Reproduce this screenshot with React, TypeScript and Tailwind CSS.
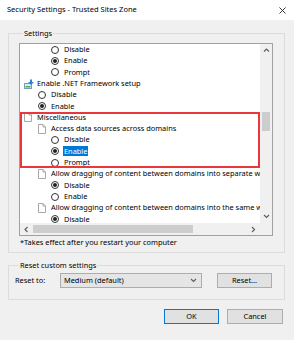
import type { ReactNode } from 'react';

type Row = {
  level: 0 | 1 | 2;
  kind: 'radio' | 'page' | 'net';
  text: string;
  checked?: boolean;
  selected?: boolean;
};

const top: Row[] = [
  { level: 2, kind: 'radio', text: 'Disable' },
  { level: 2, kind: 'radio', text: 'Enable', checked: true },
  { level: 2, kind: 'radio', text: 'Prompt' },
  { level: 0, kind: 'net', text: 'Enable .NET Framework setup' },
  { level: 1, kind: 'radio', text: 'Disable' },
  { level: 1, kind: 'radio', text: 'Enable', checked: true },
];

const marked: Row[] = [
  { level: 0, kind: 'page', text: 'Miscellaneous' },
  { level: 1, kind: 'page', text: 'Access data sources across domains' },
  { level: 2, kind: 'radio', text: 'Disable' },
  { level: 2, kind: 'radio', text: 'Enable', checked: true, selected: true },
  { level: 2, kind: 'radio', text: 'Prompt' },
];

const rest: Row[] = [
  { level: 1, kind: 'page', text: 'Allow dragging of content between domains into separate windows' },
  { level: 2, kind: 'radio', text: 'Disable', checked: true },
  { level: 2, kind: 'radio', text: 'Enable' },
  { level: 1, kind: 'page', text: 'Allow dragging of content between domains into the same window' },
  { level: 2, kind: 'radio', text: 'Disable', checked: true },
];

function Radio({ checked }: { checked?: boolean }) {
  return (
    <span className="w-[8px] h-[8px] rounded-full border border-[#333] bg-white flex items-center justify-center">
      {checked && <span className="w-[4px] h-[4px] rounded-full bg-[#222]" />}
    </span>
  );
}

function PageIcon() {
  return (
    <svg width="8" height="10" viewBox="0 0 8 10">
      <path d="M0.5 0.5h4.5l2.5 2.5v6.5h-7z" fill="#fff" stroke="#a8a8a8" />
      <path d="M5 0.5v2.5h2.5" fill="none" stroke="#a8a8a8" />
    </svg>
  );
}

function NetIcon() {
  return (
    <svg width="11" height="10" viewBox="0 0 11 10">
      <rect x="0.5" y="4.5" width="7" height="5" fill="#dfe9f3" stroke="#7a9cc0" />
      <rect x="1.5" y="7" width="5" height="1.5" fill="#4caf50" />
      <path d="M6 0.5h2v2.5h2l-3 3-3-3h2z" fill="#2f7fd8" />
    </svg>
  );
}

function Chevron({ dir }: { dir: 'up' | 'down' | 'left' | 'right' }) {
  const d = {
    up: 'M1 4.5l2.5-2.5 2.5 2.5',
    down: 'M1 2l2.5 2.5 2.5-2.5',
    left: 'M4.5 1l-2.5 2.5 2.5 2.5',
    right: 'M2 1l2.5 2.5-2.5 2.5',
  }[dir];
  return (
    <svg width="7" height="7" viewBox="0 0 7 7">
      <path d={d} fill="none" stroke="#606060" strokeWidth="1.2" />
    </svg>
  );
}

function Item({ row }: { row: Row }) {
  const pad = row.level === 0 ? 'pl-[4px]' : row.level === 1 ? 'pl-[18px]' : 'pl-[31px]';
  return (
    <div className={`flex items-center h-[11.3px] whitespace-nowrap ${pad}`}>
      <span className="w-[13px] shrink-0 flex items-center">
        {row.kind === 'radio' && <Radio checked={row.checked} />}
        {row.kind === 'page' && <PageIcon />}
        {row.kind === 'net' && <NetIcon />}
      </span>
      <span className={row.selected ? 'bg-[#0078d7] text-white px-[1px] -ml-[1px] leading-[10px]' : ''}>
        {row.text}
      </span>
    </div>
  );
}

function Button({ children, focused, w }: { children: ReactNode; focused?: boolean; w: string }) {
  return (
    <div
      className={`${w} h-[15px] flex items-center justify-center bg-[#e1e1e1] border ${
        focused ? 'border-[#0078d7]' : 'border-[#adadad]'
      }`}
    >
      {children}
    </div>
  );
}

export default function App() {
  return (
    <div className="w-[294px] h-[340px] bg-[#f0f0f0] flex flex-col text-[7.4px] text-black font-['Noto_Sans',sans-serif] overflow-hidden">
      {/* Title bar */}
      <div className="h-[20px] bg-white flex items-center justify-between pl-[7px] pr-[8px] shrink-0">
        <span className="text-[7.5px]">Security Settings - Trusted Sites Zone</span>
        <svg width="7" height="7" viewBox="0 0 7 7">
          <path d="M0.5 0.5l6 6M6.5 0.5l-6 6" stroke="#222" strokeWidth="0.9" />
        </svg>
      </div>

      <div className="pl-[8px] pr-[9px] pt-[8px]">
        {/* Settings group */}
        <fieldset className="border border-[#dcdcdc] pl-[10px] pr-[11px] pb-[2px]">
          <legend className="ml-[4px] px-[1px] leading-[10px]">Settings</legend>
          <div className="mt-[5px] h-[193px] border border-[#a0a0a0] bg-white grid grid-cols-[1fr_12px] grid-rows-[1fr_12px]">
            <div className="overflow-hidden">
              {top.map((r, i) => (
                <Item key={'t' + i} row={r} />
              ))}
              <div className="outline-2 -outline-offset-2 outline-[#e8383d]">
                {marked.map((r, i) => (
                  <Item key={'m' + i} row={r} />
                ))}
              </div>
              {rest.map((r, i) => (
                <Item key={'r' + i} row={r} />
              ))}
            </div>
            {/* vertical scrollbar */}
            <div className="bg-[#f0f0f0] flex flex-col items-center">
              <div className="h-[13px] flex items-center justify-center">
                <Chevron dir="up" />
              </div>
              <div className="mt-[55px] w-[8px] h-[19px] bg-[#cdcdcd]" />
              <div className="flex-1" />
              <div className="h-[13px] flex items-center justify-center">
                <Chevron dir="down" />
              </div>
            </div>
            {/* horizontal scrollbar */}
            <div className="bg-[#f0f0f0] flex items-center">
              <div className="w-[12px] flex items-center justify-center">
                <Chevron dir="left" />
              </div>
              <div className="ml-[1px] w-[160px] h-[8px] bg-[#cdcdcd]" />
              <div className="flex-1" />
              <div className="w-[14px] flex items-center justify-center">
                <Chevron dir="right" />
              </div>
            </div>
            <div className="bg-[#f0f0f0]" />
          </div>
          <div className="h-[14px] flex items-center pl-[1px]">*Takes effect after you restart your computer</div>
        </fieldset>

        {/* Reset group */}
        <fieldset className="mt-[7px] border border-[#dcdcdc] pl-[6px] pr-[11px] pb-[11px]">
          <legend className="ml-[4px] px-[1px] leading-[10px]">Reset custom settings</legend>
          <div className="mt-[3px] flex items-center">
            <span className="w-[45px]">Reset to:</span>
            <div className="w-[142px] h-[15px] bg-[#e5e5e5] border border-[#adadad] flex items-center justify-between pl-[3px] pr-[4px]">
              <span>Medium (default)</span>
              <Chevron dir="down" />
            </div>
            <div className="ml-[15px]">
              <Button w="w-[55px]">Reset...</Button>
            </div>
          </div>
        </fieldset>

        {/* Dialog buttons */}
        <div className="mt-[9px] flex justify-end gap-[8px] pr-[2px]">
          <Button w="w-[55px]" focused>
            OK
          </Button>
          <Button w="w-[56px]">Cancel</Button>
        </div>
      </div>
    </div>
  );
}
